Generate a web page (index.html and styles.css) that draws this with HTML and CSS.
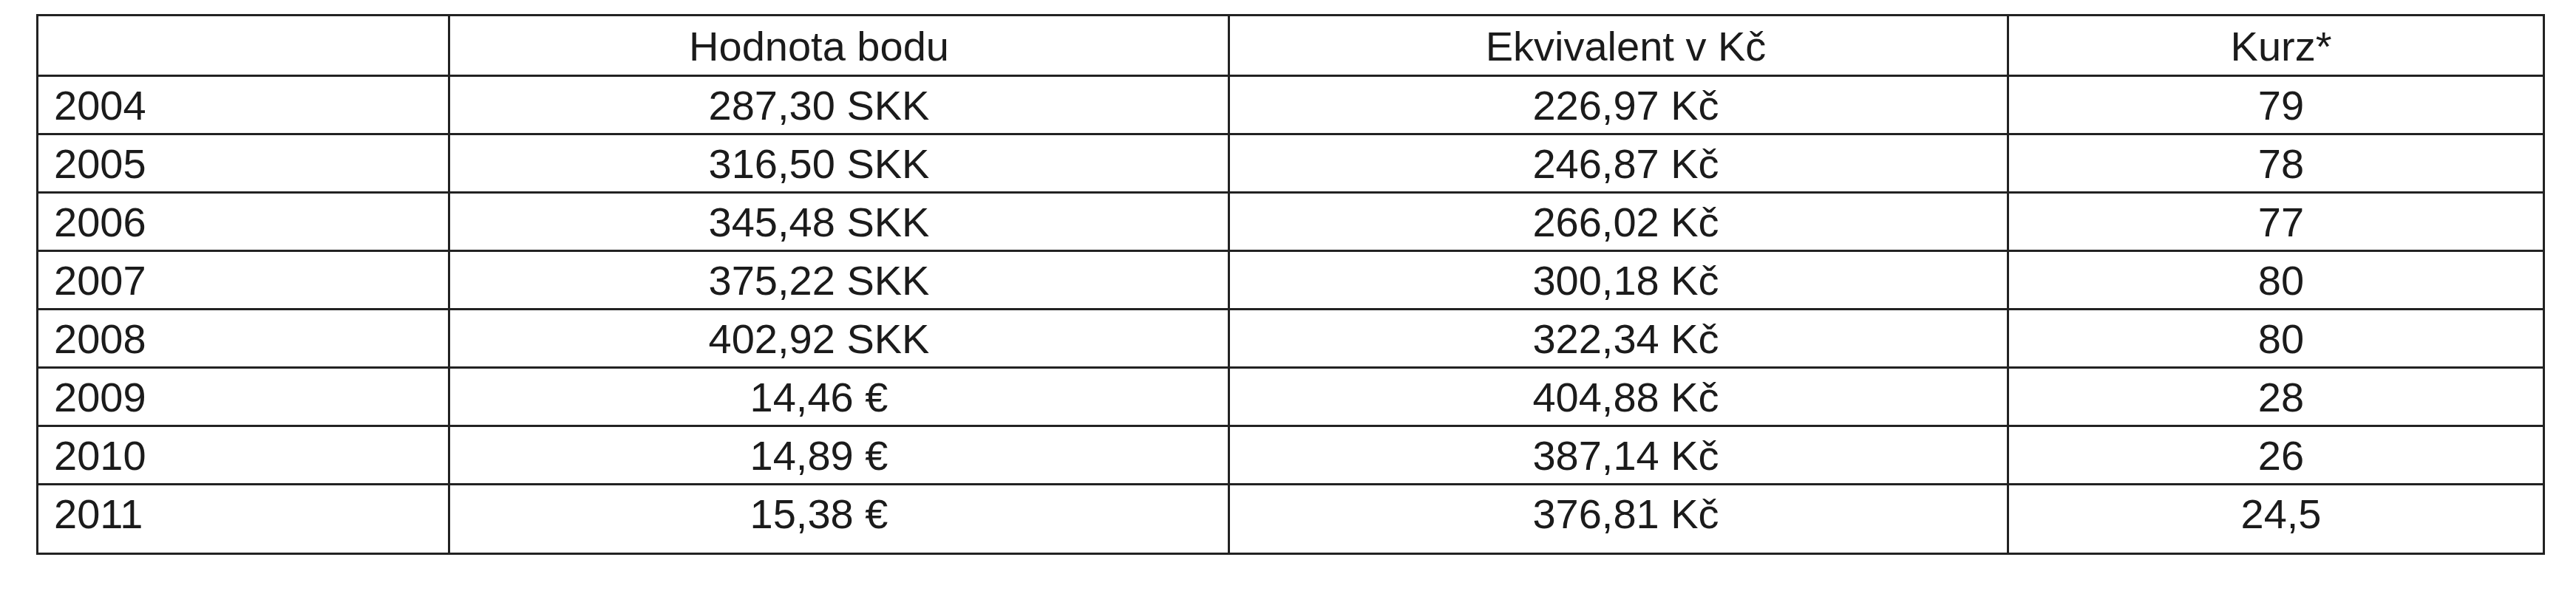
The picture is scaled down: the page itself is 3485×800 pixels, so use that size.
FILE: index.html
```html
<!DOCTYPE html>
<html lang="cs">
<head>
<meta charset="utf-8">
<title>Hodnota bodu</title>
<link rel="stylesheet" href="styles.css">
</head>
<body>
<div class="page">
  <table class="rates">
    <colgroup>
      <col class="c-year">
      <col class="c-point">
      <col class="c-czk">
      <col class="c-rate">
    </colgroup>
    <thead>
      <tr>
        <th class="year"></th>
        <th class="point">Hodnota bodu</th>
        <th class="czk">Ekvivalent v Kč</th>
        <th class="rate">Kurz*</th>
      </tr>
    </thead>
    <tbody>
      <tr><td class="year">2004</td><td class="point">287,30 SKK</td><td class="czk">226,97 Kč</td><td class="rate">79</td></tr>
      <tr><td class="year">2005</td><td class="point">316,50 SKK</td><td class="czk">246,87 Kč</td><td class="rate">78</td></tr>
      <tr><td class="year">2006</td><td class="point">345,48 SKK</td><td class="czk">266,02 Kč</td><td class="rate">77</td></tr>
      <tr><td class="year">2007</td><td class="point">375,22 SKK</td><td class="czk">300,18 Kč</td><td class="rate">80</td></tr>
      <tr><td class="year">2008</td><td class="point">402,92 SKK</td><td class="czk">322,34 Kč</td><td class="rate">80</td></tr>
      <tr><td class="year">2009</td><td class="point">14,46 €</td><td class="czk">404,88 Kč</td><td class="rate">28</td></tr>
      <tr><td class="year">2010</td><td class="point">14,89 €</td><td class="czk">387,14 Kč</td><td class="rate">26</td></tr>
      <tr class="last"><td class="year">2011</td><td class="point">15,38 €</td><td class="czk">376,81 Kč</td><td class="rate">24,5</td></tr>
    </tbody>
  </table>
</div>
</body>
</html>
```

FILE: styles.css
```css
html, body {
  margin: 0;
  padding: 0;
  background: #ffffff;
}

.page {
  padding: 19px 0 0 49px;
}

.rates {
  border-collapse: collapse;
  table-layout: fixed;
  width: 3394px;
  font-family: "Liberation Sans", Arial, sans-serif;
  font-size: 56px;
  line-height: 64px;
  color: #1b1b1b;
}

.c-year { width: 557px; }
.c-point { width: 1055px; }
.c-czk { width: 1054px; }
.c-rate { width: 725px; }

.rates th,
.rates td {
  border: 3px solid #222222;
  padding: 7px 0 5px 0;
  font-weight: normal;
  text-align: center;
  white-space: nowrap;
}

.rates th {
  padding-top: 9px;
  padding-bottom: 6px;
}

.rates .year {
  text-align: left;
  padding-left: 21px;
}

.rates .point {
  padding-right: 54px;
}

.rates .czk {
  padding-left: 20px;
}

.rates .rate {
  padding-left: 14px;
}

.rates tr.last td {
  padding-bottom: 20px;
}
```
